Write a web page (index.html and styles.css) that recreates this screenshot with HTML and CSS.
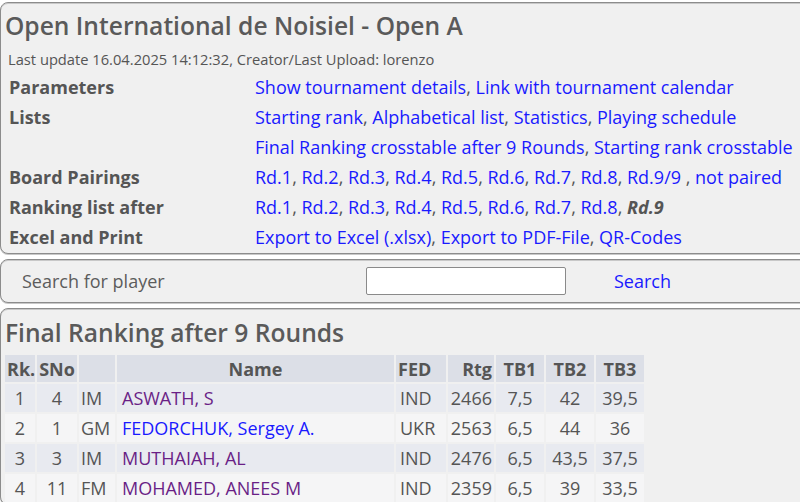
FILE: index.html
```html
<!DOCTYPE html>
<html lang="en">
<head>
<meta charset="utf-8">
<title>Open International de Noisiel - Open A</title>
<link rel="stylesheet" href="styles.css">
</head>
<body>
<div class="page">
  <div class="box info">
    <h2 class="title">Open International de Noisiel - Open A</h2>
    <div class="update">Last update 16.04.2025 14:12:32, Creator/Last Upload: lorenzo</div>
    <table class="menu">
      <tr><th>Parameters</th><td><a href="#">Show tournament details</a>, <a href="#">Link with tournament calendar</a></td></tr>
      <tr><th>Lists</th><td><a href="#">Starting rank</a>, <a href="#">Alphabetical list</a>, <a href="#">Statistics</a>, <a href="#">Playing schedule</a></td></tr>
      <tr><th></th><td><a href="#">Final Ranking crosstable after 9 Rounds</a>, <a href="#">Starting rank crosstable</a></td></tr>
      <tr><th>Board Pairings</th><td><a href="#">Rd.1</a>, <a href="#">Rd.2</a>, <a href="#">Rd.3</a>, <a href="#">Rd.4</a>, <a href="#">Rd.5</a>, <a href="#">Rd.6</a>, <a href="#">Rd.7</a>, <a href="#">Rd.8</a>, <a href="#">Rd.9/9</a> , <a href="#">not paired</a></td></tr>
      <tr><th>Ranking list after</th><td><a href="#">Rd.1</a>, <a href="#">Rd.2</a>, <a href="#">Rd.3</a>, <a href="#">Rd.4</a>, <a href="#">Rd.5</a>, <a href="#">Rd.6</a>, <a href="#">Rd.7</a>, <a href="#">Rd.8</a>, <b class="current">Rd.9</b></td></tr>
      <tr><th>Excel and Print</th><td><a href="#">Export to Excel (.xlsx)</a>, <a href="#">Export to PDF-File</a>, <a href="#">QR-Codes</a></td></tr>
    </table>
  </div>

  <div class="box search">
    <span class="search-label">Search for player</span>
    <input class="search-input" type="text">
    <a class="search-link" href="#">Search</a>
  </div>

  <div class="box results">
    <h2 class="title">Final Ranking after 9 Rounds</h2>
    <table class="ranking">
      <colgroup>
        <col class="w-rk"><col class="w-sno"><col class="w-tit"><col class="w-name"><col class="w-fed"><col class="w-rtg"><col class="w-tb"><col class="w-tb"><col class="w-tb">
      </colgroup>
      <tr class="head">
        <th class="c-rk">Rk.</th><th class="c-sno">SNo</th><th class="c-tit"></th><th class="c-name">Name</th><th class="c-fed">FED</th><th class="c-rtg">Rtg</th><th class="c-tb">TB1</th><th class="c-tb">TB2</th><th class="c-tb">TB3</th>
      </tr>
      <tr class="odd">
        <td class="c-rk">1</td><td class="c-sno">4</td><td class="c-tit">IM</td><td class="c-name"><a class="visited" href="#">ASWATH, S</a></td><td class="c-fed">IND</td><td class="c-rtg">2466</td><td class="c-tb">7,5</td><td class="c-tb">42</td><td class="c-tb">39,5</td>
      </tr>
      <tr class="even">
        <td class="c-rk">2</td><td class="c-sno">1</td><td class="c-tit">GM</td><td class="c-name"><a href="#">FEDORCHUK, Sergey A.</a></td><td class="c-fed">UKR</td><td class="c-rtg">2563</td><td class="c-tb">6,5</td><td class="c-tb">44</td><td class="c-tb">36</td>
      </tr>
      <tr class="odd">
        <td class="c-rk">3</td><td class="c-sno">3</td><td class="c-tit">IM</td><td class="c-name"><a class="visited" href="#">MUTHAIAH, AL</a></td><td class="c-fed">IND</td><td class="c-rtg">2476</td><td class="c-tb">6,5</td><td class="c-tb">43,5</td><td class="c-tb">37,5</td>
      </tr>
      <tr class="even">
        <td class="c-rk">4</td><td class="c-sno">11</td><td class="c-tit">FM</td><td class="c-name"><a class="visited" href="#">MOHAMED, ANEES M</a></td><td class="c-fed">IND</td><td class="c-rtg">2359</td><td class="c-tb">6,5</td><td class="c-tb">39</td><td class="c-tb">33,5</td>
      </tr>
    </table>
  </div>
</div>
</body>
</html>
```

FILE: styles.css
```css
html, body {
  margin: 0;
  padding: 0;
  overflow: hidden;
  background: #ffffff;
}

body {
  font-family: "Open Sans", "Noto Sans", "Liberation Sans", sans-serif;
  color: #555555;
}

.page {
  width: 830px;
  padding-top: 2px;
}

.box {
  background: #f0f0f0;
  border: 1px solid #8c8c8c;
  border-radius: 8px;
  box-shadow: inset 0 1px 0 #c8c8c8, 0 1px 0 #c8c8c8;
  margin-bottom: 5px;
}

a {
  color: #1a1aff;
  text-decoration: none;
}

a.visited {
  color: #6a1f86;
}

.title {
  margin: 0;
  padding: 0 0 0 4px;
  font-size: 24.6px;
  font-weight: 600;
  line-height: 44px;
  color: #5a5a5a;
}

.info .title {
  margin-top: 1px;
}

.update {
  font-size: 14.7px;
  line-height: 22px;
  padding-left: 7px;
}

.menu {
  border-collapse: collapse;
  margin: 2px 0 1px 8px;
  font-size: 18px;
}

.menu th {
  width: 246px;
  text-align: left;
  font-weight: 700;
  padding: 0;
  height: 30px;
  line-height: 24px;
  vertical-align: middle;
}

.menu td {
  padding: 0;
  height: 30px;
  line-height: 24px;
  vertical-align: middle;
  white-space: nowrap;
}

.menu .current {
  font-style: italic;
  font-weight: 700;
  color: #555555;
}

.search {
  display: flex;
  align-items: center;
  height: 42px;
  font-size: 18px;
}

.search-label {
  width: 344px;
  padding-left: 21px;
  color: #5c5c5c;
}

.search-input {
  box-sizing: border-box;
  width: 200px;
  height: 28px;
  margin: 0;
  padding: 0;
  border: 1px solid #8a8a8a;
  border-radius: 2px;
  background: #ffffff;
}

.search-link {
  margin-left: 48px;
}

.results .title {
  margin-top: 4px;
  line-height: 40px;
}

.ranking {
  border-collapse: separate;
  border-spacing: 2px;
  margin-left: 2px;
  font-size: 18px;
  table-layout: fixed;
  width: 639px;
}

.w-rk { width: 30px; }
.w-sno { width: 40px; }
.w-tit { width: 36px; }
.w-name { width: 277px; }
.w-fed { width: 50px; }
.w-rtg { width: 46px; }
.w-tb { width: 48px; }

.ranking th,
.ranking td {
  padding: 0 2px;
  white-space: nowrap;
  overflow: visible;
  vertical-align: middle;
  line-height: 24px;
}

.ranking th {
  background: #dcdfe7;
  font-weight: 700;
  height: 27px;
}

.ranking td {
  height: 28px;
}

.ranking .odd td {
  background: #e8eaf0;
}

.ranking .even td {
  background: #f5f5f6;
}

.c-rk { text-align: center; }
.c-sno { text-align: center; }
.c-tit { text-align: left; }
.c-name { text-align: left; }
.ranking td.c-name { padding-left: 5px; }
.ranking th.c-name { text-align: center; }
.c-fed { text-align: left; }
.ranking td.c-fed { padding-left: 4px; }
.c-rtg { text-align: right; }
.c-tb { text-align: center; }
```
